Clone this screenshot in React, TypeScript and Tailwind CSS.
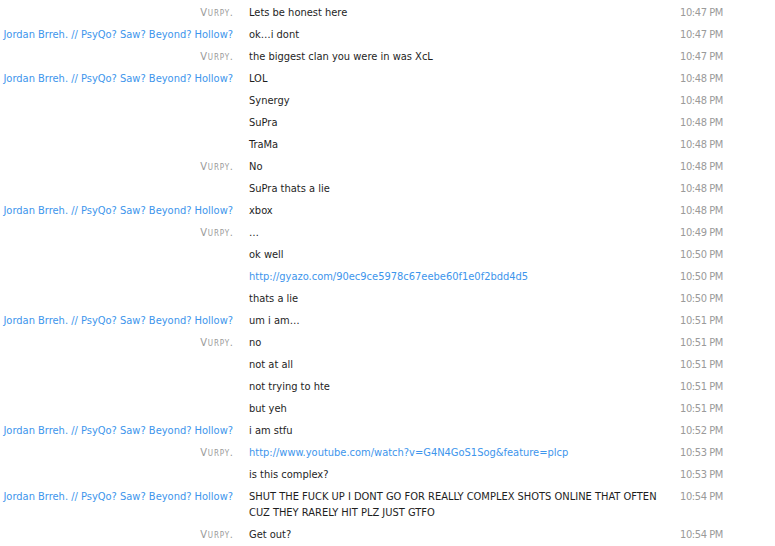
import React from "react";

type Row = { who: "" | "v" | "j"; text: string; time: string; link?: boolean };

const rows: Row[] = [
  { who: "v", text: "Lets be honest here", time: "10:47 PM" },
  { who: "j", text: "ok…i dont", time: "10:47 PM" },
  { who: "v", text: "the biggest clan you were in was XcL", time: "10:47 PM" },
  { who: "j", text: "LOL", time: "10:48 PM" },
  { who: "", text: "Synergy", time: "10:48 PM" },
  { who: "", text: "SuPra", time: "10:48 PM" },
  { who: "", text: "TraMa", time: "10:48 PM" },
  { who: "v", text: "No", time: "10:48 PM" },
  { who: "", text: "SuPra thats a lie", time: "10:48 PM" },
  { who: "j", text: "xbox", time: "10:48 PM" },
  { who: "v", text: "…", time: "10:49 PM" },
  { who: "", text: "ok well", time: "10:50 PM" },
  { who: "", text: "http://gyazo.com/90ec9ce5978c67eebe60f1e0f2bdd4d5", time: "10:50 PM", link: true },
  { who: "", text: "thats a lie", time: "10:50 PM" },
  { who: "j", text: "um i am…", time: "10:51 PM" },
  { who: "v", text: "no", time: "10:51 PM" },
  { who: "", text: "not at all", time: "10:51 PM" },
  { who: "", text: "not trying to hte", time: "10:51 PM" },
  { who: "", text: "but yeh", time: "10:51 PM" },
  { who: "j", text: "i am stfu", time: "10:52 PM" },
  { who: "v", text: "http://www.youtube.com/watch?v=G4N4GoS1Sog&feature=plcp", time: "10:53 PM", link: true },
  { who: "", text: "is this complex?", time: "10:53 PM" },
  {
    who: "j",
    text: "SHUT THE FUCK UP I DONT GO FOR REALLY COMPLEX SHOTS ONLINE THAT OFTEN CUZ THEY RARELY HIT PLZ JUST GTFO",
    time: "10:54 PM",
  },
  { who: "v", text: "Get out?", time: "10:54 PM" },
];

export default function App() {
  return (
    <div className="w-[775px] h-[546px] bg-white overflow-hidden pt-[2px] text-[11px] leading-[16px] font-['DejaVu_Sans_Condensed','DejaVu_Sans',sans-serif]">
      {rows.map((r, i) => (
        <div key={i} className="flex py-[3px]">
          <div className="w-[233px] h-[16px] shrink-0 text-right whitespace-nowrap">
            {r.who === "j" && <span className="text-[#3d95ec]">Jordan Brreh. // PsyQo? Saw? Beyond? Hollow?</span>}
            {r.who === "v" && (
              <span className="text-[#9a9a9a] [font-variant:small-caps] tracking-[0.8px] mr-[-0.8px]">Vurpy.</span>
            )}
          </div>
          <div className="ml-[16px] w-[420px] shrink-0">
            <span className={r.link ? "text-[#3d95ec]" : "text-[#1e1e1e]"}>{r.text}</span>
          </div>
          <div className="ml-auto mr-[52px] h-[16px] text-right text-[#9a9a9a] whitespace-nowrap tracking-[-0.4px]">
            {r.time}
          </div>
        </div>
      ))}
    </div>
  );
}
